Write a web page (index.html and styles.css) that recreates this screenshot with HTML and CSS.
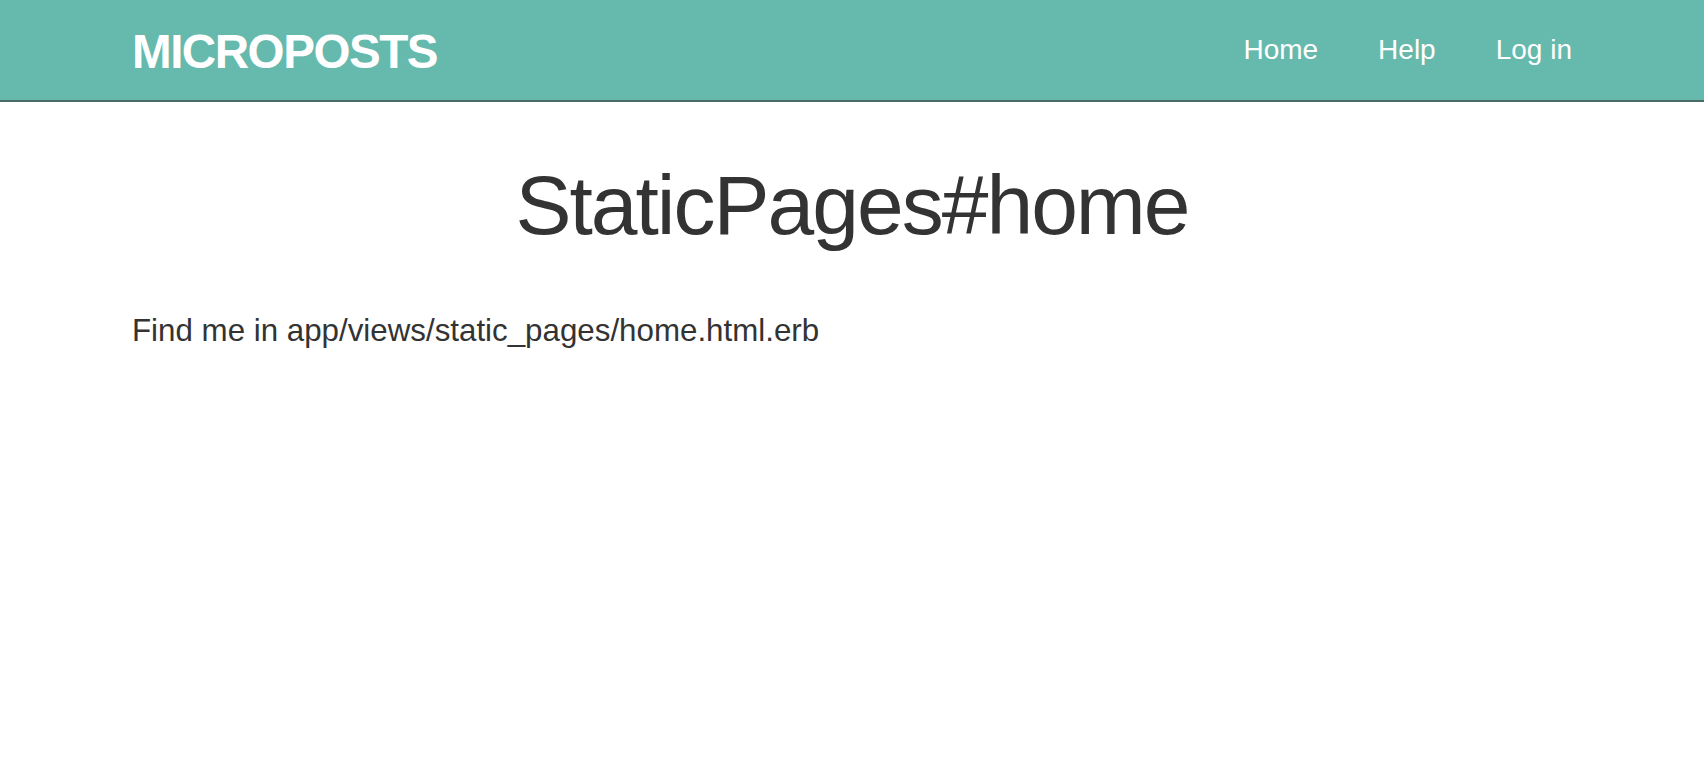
FILE: index.html
```html
<!DOCTYPE html>
<html lang="en">
<head>
<meta charset="utf-8">
<title>Microposts</title>
<link rel="stylesheet" href="styles.css">
</head>
<body>
<header class="navbar">
  <div class="container nav-inner">
    <a class="logo" href="#">microposts</a>
    <nav>
      <ul class="nav-links">
        <li><a href="#">Home</a></li>
        <li><a href="#">Help</a></li>
        <li><a href="#">Log in</a></li>
      </ul>
    </nav>
  </div>
</header>
<main class="container content">
  <h1 class="title">StaticPages#home</h1>
  <p class="lead">Find me in app/views/static_pages/home.html.erb</p>
</main>
</body>
</html>
```

FILE: styles.css
```css
html, body {
  margin: 0;
  padding: 0;
  background: #ffffff;
}

body {
  font-family: "Liberation Sans", Arial, Helvetica, sans-serif;
  color: #333333;
}

.container {
  width: 1500px;
  margin: 0 auto;
  padding: 0 30px;
  box-sizing: border-box;
}

.navbar {
  background: #66b9ad;
  height: 100px;
  border-bottom: 2px solid #4b6b66;
}

.nav-inner {
  display: flex;
  justify-content: space-between;
  align-items: flex-start;
}

.logo {
  display: block;
  padding-top: 18px;
  font-size: 47.6px;
  line-height: 68px;
  font-weight: bold;
  text-transform: uppercase;
  letter-spacing: -1.5px;
  color: #ffffff;
  text-decoration: none;
}

.nav-links {
  display: flex;
  list-style: none;
  margin: 0 -30px 0 0;
  padding: 0;
}

.nav-links a {
  display: block;
  padding: 30px;
  font-size: 28px;
  line-height: 40px;
  color: #ffffff;
  text-decoration: none;
}

.content {
  padding-top: 17px;
}

.title {
  margin: 40px 0 58px;
  font-size: 84px;
  line-height: 92.4px;
  font-weight: normal;
  letter-spacing: -2px;
  text-align: center;
  color: #333333;
}

.lead {
  margin: 0;
  font-size: 31.3px;
  line-height: 44px;
  color: #333333;
}
```
